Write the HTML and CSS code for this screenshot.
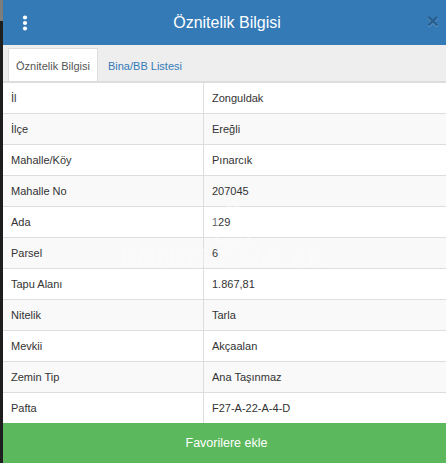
FILE: index.html
```html
<!DOCTYPE html>
<html lang="tr">
<head>
<meta charset="utf-8">
<title>Öznitelik Bilgisi</title>
<link rel="stylesheet" href="styles.css">
</head>
<body>
<div class="frame">
  <div class="edge"><div class="edge-top"></div></div>
  <div class="panel">
    <header class="head">
      <span class="menu" aria-label="menu">
        <svg width="6" height="16" viewBox="0 0 6 16"><circle cx="3" cy="2.5" r="2.1" fill="#fff"/><circle cx="3" cy="8" r="2.1" fill="#fff"/><circle cx="3" cy="13.5" r="2.1" fill="#fff"/></svg>
      </span>
      <h1 class="title">Öznitelik Bilgisi</h1>
      <span class="close">×</span>
    </header>
    <nav class="tabs">
      <span class="tab active">Öznitelik Bilgisi</span>
      <span class="tab">Bina/BB Listesi</span>
    </nav>
    <div class="body">
      <table class="attrs">
        <tr><td>İl</td><td>Zonguldak</td></tr>
        <tr><td>İlçe</td><td>Ereğli</td></tr>
        <tr><td>Mahalle/Köy</td><td>Pınarcık</td></tr>
        <tr><td>Mahalle No</td><td>207045</td></tr>
        <tr><td>Ada</td><td>129</td></tr>
        <tr><td>Parsel</td><td>6</td></tr>
        <tr><td>Tapu Alanı</td><td>1.867,81</td></tr>
        <tr><td>Nitelik</td><td>Tarla</td></tr>
        <tr><td>Mevkii</td><td>Akçaalan</td></tr>
        <tr><td>Zemin Tip</td><td>Ana Taşınmaz</td></tr>
        <tr><td>Pafta</td><td>F27-A-22-A-4-D</td></tr>
      </table>
      <div class="mark" aria-hidden="true">
        <svg class="mark-logo" width="52" height="44" viewBox="0 0 52 44"><path d="M26 2 L48 22 L42 22 L42 42 L10 42 L10 22 L4 22 Z" fill="none" stroke="#fff" stroke-width="4" stroke-linejoin="round"/></svg>
        <span class="mark-text">EMNİYET EMLAK</span>
      </div>
    </div>
    <button class="fav">Favorilere ekle</button>
  </div>
</div>
</body>
</html>
```
FILE: styles.css
```css
html, body {
  margin: 0;
  padding: 0;
}

body {
  background: #1e1e1e;
  font-family: "Liberation Sans", Arial, sans-serif;
  width: 446px;
  height: 463px;
  overflow: hidden;
}

.frame {
  display: flex;
  height: 463px;
}

.edge {
  width: 3px;
  flex: none;
  background: #1e1e1e;
}

.edge-top {
  height: 21px;
  background: #7d7d7d;
}

.panel {
  flex: 1;
  display: flex;
  flex-direction: column;
  background: #fff;
  min-width: 0;
}

/* title bar */
.head {
  height: 45px;
  flex: none;
  background: #337ab7;
  display: flex;
  align-items: center;
  position: relative;
}

.menu {
  display: flex;
  margin-left: 19px;
}

.title {
  flex: 1;
  margin: 0;
  text-align: center;
  color: #fff;
  font-weight: normal;
  font-size: 16px;
  line-height: 20px;
  padding-right: 20px;
}

.close {
  position: absolute;
  right: 7px;
  top: 9px;
  font-size: 21px;
  line-height: 24px;
  font-weight: bold;
  color: #000;
  opacity: 0.22;
  text-shadow: 0 1px 0 #fff;
}

/* tabs */
.tabs {
  flex: none;
  background: #eeeeee;
  display: flex;
  align-items: flex-end;
  padding: 3px 0 0 5px;
  height: 33px;
  border-bottom: 2px solid #dddddd;
}

.tab {
  height: 33px;
  box-sizing: border-box;
  display: flex;
  align-items: center;
  padding: 1px 10px 0 8px;
  font-size: 11px;
  white-space: nowrap;
  color: #337ab7;
  border: 1px solid transparent;
  border-bottom: 0;
}

.tab.active {
  background: #fff;
  color: #555;
  border-color: #dddddd;
  padding: 1px 7px 0 7px;
  margin-right: 1px;
}

/* attribute table */
.body {
  flex: 1;
  position: relative;
  overflow: hidden;
}

.attrs {
  width: 100%;
  border-collapse: collapse;
  font-size: 11px;
  color: #333;
}

.attrs td {
  height: 30px;
  padding: 0 8px;
  box-sizing: content-box;
  border-bottom: 1px solid #dddddd;
  vertical-align: middle;
}

.attrs tr:last-child td {
  border-bottom: 0;
}

.attrs td:first-child {
  width: 184px;
  border-right: 1px solid #dddddd;
}

.attrs tr:nth-child(even) td {
  background: #f9f9f9;
}

.mark {
  position: absolute;
  left: 120px;
  top: 118px;
  width: 200px;
  display: flex;
  flex-direction: column;
  align-items: center;
  pointer-events: none;
  opacity: 0.3;
}

.mark-logo {
  margin-left: 20px;
}

.mark-text {
  color: #fff;
  font-weight: bold;
  font-size: 24px;
  letter-spacing: 0.5px;
  line-height: 26px;
  white-space: nowrap;
}

/* footer button */
.fav {
  flex: none;
  height: 40px;
  border: 0;
  margin: 0;
  background: #5cb85c;
  color: #fff;
  font-family: "Liberation Sans", Arial, sans-serif;
  font-size: 12.5px;
  padding: 0 0 0 4px;
  width: 100%;
}
```
